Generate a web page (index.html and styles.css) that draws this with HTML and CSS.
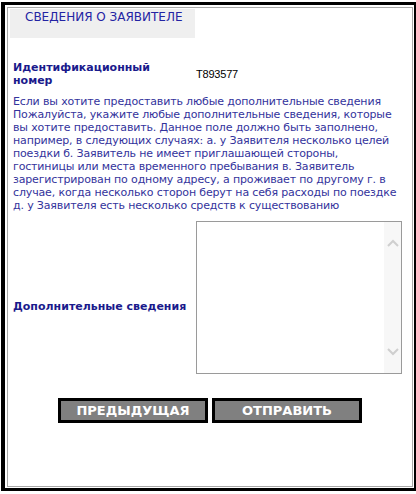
FILE: index.html
```html
<!DOCTYPE html>
<html lang="ru">
<head>
<meta charset="utf-8">
<title>Сведения о заявителе</title>
<link rel="stylesheet" href="styles.css">
</head>
<body>
<div class="frame">
  <div class="panel">
    <div class="tab">СВЕДЕНИЯ О ЗАЯВИТЕЛЕ</div>
    <div class="form">
      <div class="row row-id">
        <div class="label">Идентификационный<br>номер</div>
        <div class="value">T893577</div>
      </div>
      <p class="hint">Если вы хотите предоставить любые дополнительные сведения<br>Пожалуйста, укажите любые дополнительные сведения, которые<br>вы хотите предоставить. Данное поле должно быть заполнено,<br>например, в следующих случаях: а. у Заявителя несколько целей<br>поездки б. Заявитель не имеет приглашающей стороны,<br>гостиницы или места временного пребывания в. Заявитель<br>зарегистрирован по одному адресу, а проживает по другому г. в<br>случае, когда несколько сторон берут на себя расходы по поездке<br>д. у Заявителя есть несколько средств к существованию</p>
      <div class="row row-extra">
        <label class="label" for="extra">Дополнительные сведения</label>
        <div class="field">
          <div class="textbox">
            <textarea id="extra" class="textarea"></textarea>
            <div class="scrollbar">
              <svg class="chev" width="12" height="8" viewBox="0 0 12 8"><path d="M1 7 L6 2 L11 7" fill="none" stroke="#cfcfcf" stroke-width="2"/></svg>
              <svg class="chev" width="12" height="8" viewBox="0 0 12 8"><path d="M1 1 L6 6 L11 1" fill="none" stroke="#cfcfcf" stroke-width="2"/></svg>
            </div>
          </div>
        </div>
      </div>
      <div class="actions">
        <button class="btn" type="button">ПРЕДЫДУЩАЯ</button>
        <button class="btn" type="button">ОТПРАВИТЬ</button>
      </div>
    </div>
  </div>
</div>
</body>
</html>
```

FILE: styles.css
```css
html, body {
  margin: 0;
  padding: 0;
  background: #ffffff;
}

body {
  font-family: "DejaVu Sans", Verdana, sans-serif;
  font-size: 11px;
  line-height: 13px;
  color: #33339c;
}

.frame {
  margin: 2px 0 0 1px;
  width: 406px;
  border-style: solid;
  border-color: #000;
  border-width: 3px 3px 3px 4px;
  padding: 2px 1px 1px 2px;
}

.panel {
  border: 1px solid #a8a8a8;
  height: 478px;
  box-sizing: content-box;
}

.tab {
  margin: 1px 0 0 2px;
  width: 170px;
  height: 27px;
  padding: 2px 0 0 15px;
  background: #efefef;
  color: #2323a3;
  font-size: 12px;
  white-space: nowrap;
}

.form {
  padding: 0 5px 0 5px;
}

.row {
  display: grid;
  grid-template-columns: 183px 1fr;
  align-items: center;
}

.row-id {
  margin-top: 23px;
}

.label {
  font-weight: bold;
  color: #1a1a8c;
}

.value {
  font-family: "Liberation Sans", Arial, sans-serif;
  font-size: 11px;
  letter-spacing: -0.2px;
  color: #000;
}

.hint {
  margin: 8px 0 0 0;
  white-space: nowrap;
  letter-spacing: -0.15px;
}

.row-extra {
  margin-top: 9px;
}

.field {
  padding-bottom: 17px;
}

.textbox {
  display: flex;
  width: 204px;
  height: 151px;
  border: 1px solid #9a9a9a;
  background: #fff;
}

.textarea {
  flex: 1;
  border: none;
  margin: 0;
  padding: 2px;
  resize: none;
  outline: none;
  font: inherit;
  background: #fff;
}

.scrollbar {
  width: 17px;
  background: #f7f7f7;
  display: flex;
  flex-direction: column;
  justify-content: space-between;
  align-items: center;
  padding: 17px 0 17px;
}

.chev {
  display: block;
}

.actions {
  margin-top: 7px;
  display: flex;
  justify-content: center;
  gap: 4px;
}

.btn {
  width: 150px;
  height: 25px;
  margin: 0;
  padding: 0;
  border: 3px solid #000;
  background: #808080;
  color: #ffffff;
  font-family: "DejaVu Sans", Verdana, sans-serif;
  font-weight: bold;
  font-size: 13px;
  line-height: 19px;
}
```
